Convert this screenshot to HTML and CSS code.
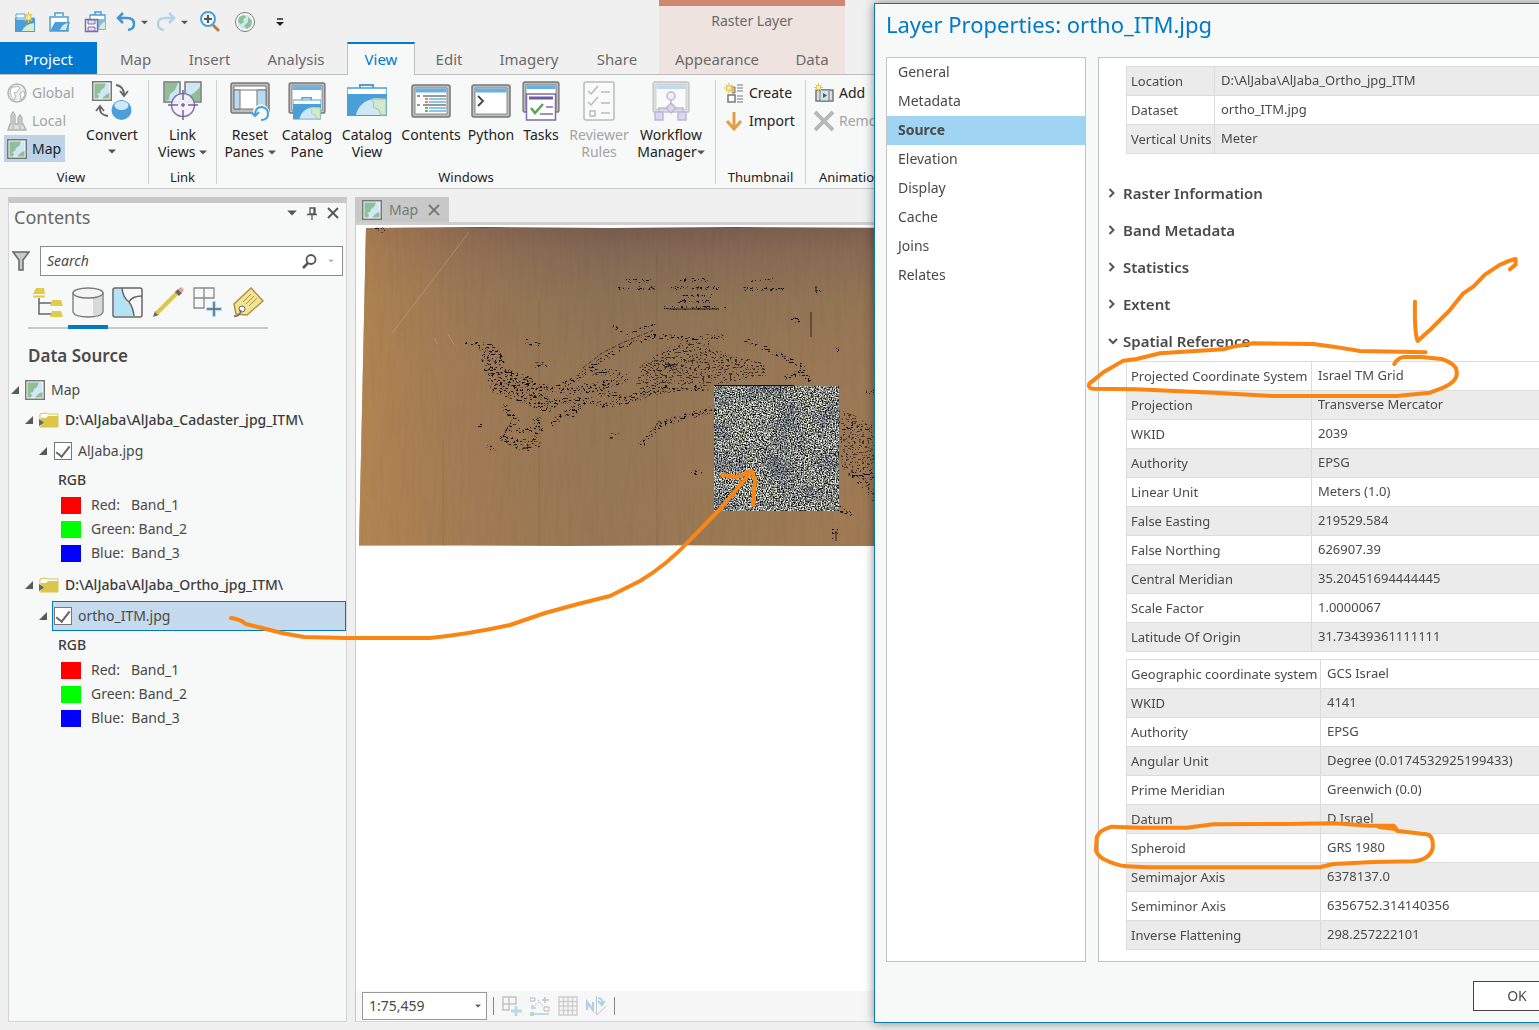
FILE: index.html
```html
<!DOCTYPE html>
<html lang="en">
<head>
<meta charset="utf-8">
<title>Layer Properties: ortho_ITM.jpg</title>
<link rel="stylesheet" href="styles.css">
</head>
<body>
<svg class="defs" width="0" height="0" aria-hidden="true">
  <symbol id="map-thumb" viewBox="0 0 20 20"><rect x=".75" y=".75" width="18.500" height="18.500" fill="#fff" stroke="#777" stroke-width="1.500"/><path d="M2.500 2.500h15v15h-15z" fill="#cfe6f5"/><path d="M2.500 2.500H14L12 7l-3 2-1 3-3 1 2 2-1 2.500H2.500zM15 13l2.500-1v5.500H10l2-2z" fill="#8fbf95"/></symbol>
  <symbol id="toolbox" viewBox="0 0 40 40"><path d="M13 7V4h13v3" fill="none" stroke="#4aa0d8" stroke-width="2"/><path d="M0 7h40v7H0z" fill="#fff" stroke="#4aa0d8" stroke-width="1.500"/><path d="M0 13h40v22H0z" fill="#4a9fd8"/><path d="M9 34q3-14 20-17l10 1v16z" fill="#cde7f6"/><path d="M24 18l15 0v16h-5l-2-5-6-3 1-4z" fill="#d2eacb" stroke="#9bc4a8"/></symbol>
  <symbol id="win" viewBox="0 0 40 34"><rect x="1" y="1" width="38" height="32" rx="2" fill="#bdbdbd" stroke="#777" stroke-width="1.500"/><path d="M4 4h32v26H4z" fill="#fff" stroke="#888"/><path d="M4.500 4.500h31v4h-31z" fill="#67b1e3"/></symbol>
  <symbol id="star" viewBox="0 0 12 12"><path d="M6 0v12M0 6h12M2 2l8 8M10 2l-8 8" stroke="#dfc544" stroke-width="1.300"/><circle cx="6" cy="6" r="3" fill="#fbef9a" stroke="#d9bf3c"/></symbol>
  <symbol id="folder" viewBox="0 0 20 16"><path d="M1 7V2l6-1 2 1h10v13H1z" fill="#fff" stroke="#d9c34c"/><path d="M2 6h5l2-2h10v11H2z" fill="#dbc54c"/><path d="M0 7l5 3.500L0 14z" fill="#666"/></symbol>
  <symbol id="caret" viewBox="0 0 8 5"><path d="M0 .5h8L4 4.500z" fill="currentColor"/></symbol>
  <symbol id="tri" viewBox="0 0 8 8"><path d="M8 0v8H0z" fill="#5a5a5a"/></symbol>
  <symbol id="x" viewBox="0 0 12 12"><path d="M1 1l10 10M11 1L1 11" stroke="currentColor" stroke-width="1.800"/></symbol>
  <symbol id="chev" viewBox="0 0 8 10"><path d="M1.500 1l4 4-4 4" fill="none" stroke="#555" stroke-width="2"/></symbol>
</svg>

<div class="app">
  <header class="top">
    <div class="top-main">
      <div class="quick" role="toolbar" aria-label="Quick access">
        <button aria-label="New project" class="q35"><svg width="22" height="22" viewBox="0 0 22 22"><path d="M1 7h20v14H1z" fill="#4a9fd8"/><path d="M2 7V3h9v4M2 7h12v2H2z" fill="#fff" stroke="#4a9fd8"/><path d="M8 20q3-7 12-8v8z" fill="#d5ecd6"/><use href="#star" x="9" y="1" width="11" height="11"/></svg></button>
        <button aria-label="Open project" class="q35"><svg width="22" height="22" viewBox="0 0 22 22"><path d="M6 5V2h8v3M1 6h18v14H1z" fill="#fff" stroke="#4a9fd8" stroke-width="1.500"/><path d="M1 20l5-9h15l-3 9z" fill="#4a9fd8"/><path d="M11 19q2-6 8-7l-2 7z" fill="#d5ecd6"/></svg></button>
        <button aria-label="Save project" class="q30"><svg width="22" height="22" viewBox="0 0 22 22"><path d="M11 4V1h6v3" fill="none" stroke="#4a9fd8" stroke-width="1.500"/><path d="M6 4h15v14H6z" fill="#fff" stroke="#4a9fd8" stroke-width="1.300"/><path d="M13 8h8v10h-7z" fill="#7fbde3"/><path d="M15 18q1-6 6-7v7z" fill="#d5ecd6"/><path d="M1.500 8.500h12v12h-12z" fill="#fff" stroke="#7b6aa8" stroke-width="1.500"/><path d="M4 9h7v4H4zM4 16h7v4H4z" fill="#e4dff0" stroke="#7b6aa8"/></svg></button>
        <button aria-label="Undo" class="q40"><svg width="20" height="20" viewBox="0 0 20 20"><path d="M7 1L2 6l5 5M2 6h9q7 0 7 6 0 5-6 6" fill="none" stroke="#3f97d3" stroke-width="2.500"/></svg><svg class="car" width="7" height="5"><use href="#caret"/></svg></button>
        <button aria-label="Redo" class="q45"><svg width="20" height="20" viewBox="0 0 20 20"><path d="M13 1l5 5-5 5M18 6H9q-7 0-7 6 0 5 6 6" fill="none" stroke="#b3d3e8" stroke-width="2.500"/></svg><svg class="car" width="7" height="5"><use href="#caret"/></svg></button>
        <button aria-label="Zoom in" class="q35"><svg width="22" height="22" viewBox="0 0 22 22"><path d="M14 14l6 6" stroke="#b97d48" stroke-width="3"/><circle cx="9" cy="8" r="7" fill="#f5fafd" stroke="#4a9fd8" stroke-width="2"/><path d="M9 4v8M5 8h8" stroke="#555" stroke-width="2.200"/></svg></button>
        <button aria-label="Full extent" class="q42"><svg width="22" height="22" viewBox="0 0 22 22"><circle cx="11" cy="11" r="9.500" fill="#fff" stroke="#777"/><circle cx="11" cy="11" r="7.500" fill="#cbe7f2"/><path d="M5 6l5-2 2 2-3 3 1 2-3 2-3-2zM14 6l4 4-1 5-4 3-3-3 4-4z" fill="#8fbf95"/></svg></button>
        <button aria-label="Customize toolbar"><svg width="8" height="9" viewBox="0 0 8 9"><path d="M1 1h6" stroke="#222" stroke-width="1.500"/><path d="M0 4h8L4 8z" fill="#222"/></svg></button>
      </div>
      <nav class="tabs" aria-label="Ribbon">
        <button class="tab project">Project</button><button class="tab t77">Map</button><button class="tab t71">Insert</button><button class="tab t102">Analysis</button><button class="tab active">View</button><button class="tab t68">Edit</button><button class="tab t92">Imagery</button><button class="tab t84">Share</button>
      </nav>
    </div>
    <div class="context">
      <span class="context-title">Raster Layer</span>
      <nav class="tabs" aria-label="Raster Layer"><button class="tab t116">Appearance</button><button class="tab t70">Data</button></nav>
    </div>
  </header>

  <section class="ribbon" aria-label="View commands">
    <div class="group g-view">
      <div class="cmds">
        <div class="stack">
          <button class="small off"><svg width="20" height="20" viewBox="0 0 20 20"><circle cx="10" cy="10" r="9" fill="#eee" stroke="#b5b5b5" stroke-width="1.500"/><path d="M4 5l6-2 3 2-3 4-3 1 2 4-2 3-4-6zM13 10l4-2 1 4-4 5z" fill="#fff" stroke="#b5b5b5"/></svg>Global</button>
          <button class="small off"><svg width="20" height="20" viewBox="0 0 20 20"><path d="M1 19l2-6h1V4l2-3 2 3v9h3V7l2-3 2 3v6h1l3 6z" fill="#ddd" stroke="#b0b0b0" stroke-width="1.300"/><path d="M6 4v14M13 7v11" stroke="#b0b0b0"/></svg>Local</button>
          <button class="small on"><svg width="20" height="20"><use href="#map-thumb"/></svg>Map</button>
        </div>
        <button class="big b72"><svg width="40" height="40" viewBox="0 0 40 40"><use href="#map-thumb" width="20" height="20"/><path d="M24 4q8 1 8 10M28 10l4 5 4-5M16 35Q7 34 8 26M4 30l4-5 4 5" fill="none" stroke="#666" stroke-width="1.800"/><circle cx="29.500" cy="29" r="10" fill="#4a9fd8"/><ellipse cx="29.500" cy="24.500" rx="7" ry="4.500" fill="#cfe8f8"/></svg><span>Convert</span><svg class="car" width="8" height="5"><use href="#caret"/></svg></button>
      </div>
      <h2>View</h2>
    </div>
    <div class="group g-link">
      <div class="cmds">
        <button class="big b68"><svg width="40" height="40" viewBox="0 0 40 40"><path d="M1 1h16v20H1zM22 1h16v20H22z" fill="#cfe6f5" stroke="#777" stroke-width="1.500"/><path d="M2 2h13l-3 7-5 4-1 6-4 1zM37 6v14H25l1-5 5-3z" fill="#8fbf95"/><circle cx="20" cy="24" r="11.500" fill="#f5f3fa" fill-opacity=".9" stroke="#8576ad" stroke-width="1.500"/><path d="M20 9v10M20 29v10M5 24h10M25 24h10M18 24h4M20 22v4" stroke="#7462a3" stroke-width="1.500"/></svg><span>Link<br>Views <svg class="car" width="8" height="5"><use href="#caret"/></svg></span></button>
      </div>
      <h2>Link</h2>
    </div>
    <div class="group g-win">
      <div class="cmds">
        <button class="big b56"><svg width="40" height="40" viewBox="0 0 40 40"><rect x="1" y="2" width="38" height="30" rx="2" fill="#bdbdbd" stroke="#777" stroke-width="1.500"/><path d="M4 5h32v23H4z" fill="#fff" stroke="#777"/><path d="M4 9h32" stroke="#777"/><path d="M4 9h6v19H4zM27 9h9v19h-9z" fill="#b9dbf0" stroke="#777"/><circle cx="31" cy="32" r="8.500" fill="#f7f8f8"/><path d="M21 31l4 4 4-4M25 34q0-8 7-8 6 1 6 7 0 6-7 6" fill="none" stroke="#4a9fd8" stroke-width="2"/></svg><span>Reset<br>Panes <svg class="car" width="8" height="5"><use href="#caret"/></svg></span></button>
        <button class="big b58"><svg width="40" height="40" viewBox="0 0 40 40"><use href="#win" y="1" width="40" height="32"/><use href="#toolbox" x="6" y="14" width="28" height="28"/></svg><span>Catalog<br>Pane</span></button>
        <button class="big b62"><svg width="40" height="40" viewBox="0 0 40 40"><use href="#toolbox" width="40" height="40"/></svg><span>Catalog<br>View</span></button>
        <button class="big b66"><svg width="40" height="40" viewBox="0 0 40 40"><use href="#win" y="3" width="40" height="34"/><path d="M12 15h23M12 24h23" stroke="#777" stroke-width="1.500"/><path d="M6 15h3M6 24h3" stroke="#777" stroke-width="1.500"/><path d="M18 18h17M18 21h17M18 27h17M18 30h17" stroke="#67b1e3" stroke-width="1.500"/><path d="M14 18h3M14 21h3" stroke="#e08a5c" stroke-width="2"/><path d="M14 27h3M14 30h3" stroke="#70b070" stroke-width="2"/></svg><span>Contents</span></button>
        <button class="big b54"><svg width="40" height="40" viewBox="0 0 40 40"><use href="#win" y="3" width="40" height="34"/><path d="M7 15l5 5-5 5" fill="none" stroke="#444" stroke-width="1.800"/></svg><span>Python</span></button>
        <button class="big b46"><svg width="40" height="40" viewBox="0 0 40 40"><use href="#win" width="40" height="32"/><path d="M5.500 13h29v26h-29z" fill="#fff" stroke="#7e6cab" stroke-width="1.500"/><path d="M8 17h24" stroke="#6d58a0" stroke-width="3"/><path d="M10 27l4 5 8-9" fill="none" stroke="#5ba35b" stroke-width="2.500"/><path d="M25 26h7M19 33h13" stroke="#7e6cab" stroke-width="1.500"/></svg><span>Tasks</span></button>
        <button class="big b70 off"><svg width="40" height="40" viewBox="0 0 40 40"><rect x="5" y="1" width="30" height="38" rx="2" fill="#fafafa" stroke="#bbb" stroke-width="1.500"/><path d="M9 10l3 3 7-8M9 21l3 3 7-8M11 30h5v5h-5zM22 11h9M22 22h9M22 32h9" fill="none" stroke="#bbb" stroke-width="1.500"/></svg><span>Reviewer<br>Rules</span></button>
        <button class="big b74"><svg width="40" height="40" viewBox="0 0 40 40"><use href="#win" width="40" height="32" opacity=".4"/><path d="M20 18v8M8 32v-5h24v5" fill="none" stroke="#c0b6d8" stroke-width="1.500"/><circle cx="20" cy="15" r="4" fill="#f2eff8" stroke="#c0b6d8" stroke-width="1.500"/><path d="M20 22l5 5-5 5-5-5zM4 31h8v8H4zM27 31h8v8h-8z" fill="#ddd6ea" stroke="#c0b6d8" stroke-width="1.500"/></svg><span>Workflow<br>Manager<svg class="car" width="8" height="5"><use href="#caret"/></svg></span></button>
      </div>
      <h2>Windows</h2>
    </div>
    <div class="group g-thumb">
      <div class="cmds stack">
        <button class="small"><svg width="20" height="20" viewBox="0 0 20 20"><path d="M5 4h6v6H8" fill="#f3b56a" stroke="#777"/><path d="M4 12h7v7H4z" fill="#fff" stroke="#777" stroke-width="1.500"/><path d="M13 2h6M13 5h6M13 8h6M13 13h6M13 16h6M13 19h6" stroke="#777"/><use href="#star" width="10" height="10"/></svg>Create</button>
        <button class="small"><svg width="20" height="20" viewBox="0 0 20 20"><path d="M10 1v16M3 10l7 8 7-8" fill="none" stroke="#e69c45" stroke-width="3"/></svg>Import</button>
      </div>
      <h2>Thumbnail</h2>
    </div>
    <div class="group g-anim">
      <div class="cmds stack">
        <button class="small"><svg width="20" height="20" viewBox="0 0 20 20"><path d="M2 7h17v11H2z" fill="#ddd" stroke="#777" stroke-width="1.500"/><path d="M6 7h9v11H6z" fill="#cbe7f5" stroke="#777"/><path d="M9 10l4 2.500L9 15z" fill="#555"/><use href="#star" width="9" height="9"/></svg>Add</button>
        <button class="small off"><svg width="20" height="20" viewBox="0 0 20 20"><path d="M1 1l18 18M19 1L1 19" stroke="#b8b8b8" stroke-width="4"/></svg>Remove</button>
      </div>
      <h2>Animation</h2>
    </div>
  </section>

  <main class="work">
    <aside class="pane">
      <div class="pane-head"><h1>Contents</h1>
        <button aria-label="Pane menu"><svg width="10" height="6" viewBox="0 0 8 5"><use href="#caret"/></svg></button>
        <button aria-label="Pin"><svg width="10" height="13" viewBox="0 0 10 13"><path d="M3 1h5v6H3zM0 7.500h10M5 8v5M7 1v6" fill="none" stroke="#555" stroke-width="1.300"/></svg></button>
        <button aria-label="Close pane"><svg width="12" height="12" viewBox="0 0 12 12"><use href="#x"/></svg></button>
      </div>
      <div class="search-row">
        <svg width="18" height="22" viewBox="0 0 18 22"><path d="M1 2h16l-6 8v10H7V10z" fill="#c9c9c9" stroke="#666" stroke-width="1.500"/></svg>
        <div class="search"><input type="text" aria-label="Search" placeholder="Search">
          <svg width="15" height="15" viewBox="0 0 15 15"><circle cx="9" cy="5.500" r="4.500" fill="none" stroke="#555" stroke-width="1.800"/><path d="M6 9l-5 5" stroke="#555" stroke-width="2.500"/></svg>
          <svg class="pale" width="6" height="4" viewBox="0 0 8 5"><use href="#caret"/></svg></div>
      </div>
      <div class="views" role="toolbar" aria-label="List by">
        <button aria-label="Drawing order"><svg width="32" height="32" viewBox="0 0 32 32"><path d="M7 12v16h14M7 17h14" fill="none" stroke="#666" stroke-width="1.500"/><path d="M4 2h8l1 6H1zM1 9.500h12v2H1zM20 14h9l2 6H18zM20 25h9l2 6H18z" fill="#e0cb4a"/></svg></button>
        <button aria-label="Data source" class="sel"><svg width="32" height="32" viewBox="0 0 32 32"><path d="M1 7v19q2 5 15 5t15-5V7z" fill="#f5f5f5" stroke="#777" stroke-width="1.300"/><path d="M21 11l9-3v18q-2 3-9 4z" fill="#d8d8d8"/><ellipse cx="16" cy="7" rx="15" ry="5" fill="#f3f3f3" stroke="#777" stroke-width="1.300"/></svg></button>
        <button aria-label="Selection"><svg width="32" height="32" viewBox="0 0 32 32"><rect x="1" y="2" width="29" height="29" rx="2" fill="#f8f8f8" stroke="#666" stroke-width="1.500"/><path d="M2 3h8q1 10 7 14 4 4 5 13H2z" fill="#b3e3f5"/><path d="M10 2q1 10 7 14 4 5 5 14M17 16q3-6 13-6" fill="none" stroke="#666" stroke-width="1.500"/></svg></button>
        <button aria-label="Editing"><svg width="32" height="32" viewBox="0 0 32 32"><path d="M1 31l2-6 4 4z" fill="#666"/><path d="M3 26L24 5l3 3L6 29z" fill="#dcc748"/><path d="M23 6l3-3 4 4-3 3z" fill="#666"/><path d="M26 3l3-2 3 3-2 3z" fill="#e5a39c"/></svg></button>
        <button aria-label="Snapping"><svg width="32" height="32" viewBox="0 0 32 32"><path d="M2 2h20v10H2zM2 12h10v10H2zM12 2v10" fill="none" stroke="#888" stroke-width="1.300"/><path d="M22 15v16M14 23h16" stroke="#b5e0f5" stroke-width="4"/><path d="M22 16v14M15 23h14" stroke="#567" stroke-width="1.500"/></svg></button>
        <button aria-label="Labeling"><svg width="32" height="32" viewBox="0 0 32 32"><path d="M19 2l12 13-16 14-11-1-2-10z" fill="#f3e394" stroke="#b58e3f" stroke-width="1.500"/><path d="M11 16l8-8M14 18l8-8M17 20l8-8" stroke="#b58e3f"/><circle cx="10" cy="23" r="3" fill="#fff" stroke="#666"/><path d="M9 24q-1 7-7 6" fill="none" stroke="#666" stroke-width="1.500"/></svg></button>
      </div>
      <h2 class="ds">Data Source</h2>
      <ul class="tree">
        <li class="row r-map"><svg width="8" height="8"><use href="#tri"/></svg><svg width="20" height="20"><use href="#map-thumb"/></svg><span>Map</span></li>
        <li class="row r-fold"><svg width="8" height="8"><use href="#tri"/></svg><svg width="20" height="16"><use href="#folder"/></svg><b>D:\AlJaba\AlJaba_Cadaster_jpg_ITM\</b></li>
        <li class="row r-layer"><svg width="8" height="8"><use href="#tri"/></svg><label><input type="checkbox" checked>AlJaba.jpg</label></li>
        <li class="row r-rgb"><b>RGB</b></li>
        <li class="row r-band"><i class="red"></i>Red:   Band_1</li>
        <li class="row r-band"><i class="green"></i>Green: Band_2</li>
        <li class="row r-band"><i class="blue"></i>Blue:  Band_3</li>
        <li class="row r-fold second"><svg width="8" height="8"><use href="#tri"/></svg><svg width="20" height="16"><use href="#folder"/></svg><b>D:\AlJaba\AlJaba_Ortho_jpg_ITM\</b></li>
        <li class="row r-layer chosen"><svg width="8" height="8"><use href="#tri"/></svg><label><input type="checkbox" checked>ortho_ITM.jpg</label></li>
        <li class="row r-rgb"><b>RGB</b></li>
        <li class="row r-band"><i class="red"></i>Red:   Band_1</li>
        <li class="row r-band"><i class="green"></i>Green: Band_2</li>
        <li class="row r-band"><i class="blue"></i>Blue:  Band_3</li>
      </ul>
    </aside>

    <section class="view">
      <div class="doc-tabs"><div class="doc-tab"><svg width="20" height="20"><use href="#map-thumb"/></svg><span>Map</span><button aria-label="Close map"><svg width="12" height="12"><use href="#x"/></svg></button></div></div>
      <div class="canvas">
        <svg width="560" height="326" viewBox="356 225 560 326" role="img" aria-label="Scanned cadastral sheet with orthophoto">
          <defs>
            <linearGradient id="sheet" x1="0" y1="0" x2="0" y2="1"><stop offset="0" stop-color="#6c504b"/><stop offset=".08" stop-color="#7d6153"/><stop offset=".22" stop-color="#8a7053"/><stop offset=".45" stop-color="#967656"/><stop offset="1" stop-color="#9c7853"/></linearGradient>
            <linearGradient id="warm"><stop offset="0" stop-color="#bd8b50" stop-opacity=".7"/><stop offset=".2" stop-color="#a97f55" stop-opacity=".5"/><stop offset=".45" stop-color="#8e7857" stop-opacity=".3"/><stop offset=".9" stop-color="#a88058" stop-opacity=".3"/></linearGradient>
            <filter id="ink" x="-10%" y="-10%" width="120%" height="120%" color-interpolation-filters="sRGB"><feTurbulence type="fractalNoise" baseFrequency=".37 .61" numOctaves="4" seed="11"/><feColorMatrix values="0 0 0 0 .08  0 0 0 0 .06  0 0 0 0 .1  14 0 0 0 -8.200"/><feComposite in2="SourceGraphic" operator="in"/></filter>
            <filter id="grain" x="0" y="0" width="100%" height="100%" color-interpolation-filters="sRGB"><feTurbulence type="fractalNoise" baseFrequency=".71 .77" numOctaves="4" seed="3"/><feColorMatrix values="2.300 .5 .3 0 -1.030  2.300 .5 .2 0 -.970  2.300 .3 .5 0 -1.050  0 0 0 0 1"/></filter>
            <filter id="tone" x="0" y="0" width="100%" height="100%" color-interpolation-filters="sRGB"><feTurbulence type="fractalNoise" baseFrequency=".03 .04" numOctaves="2" seed="8"/><feColorMatrix values="0 0 0 0 .22  0 0 0 0 .28  0 0 0 0 .38  2 0 0 0 -.850"/></filter>
            <filter id="weave" x="0" y="0" width="100%" height="100%" color-interpolation-filters="sRGB"><feTurbulence type="fractalNoise" baseFrequency=".25 .02" numOctaves="3" seed="5"/><feColorMatrix values="0 0 0 0 .2  0 0 0 0 .12  0 0 0 0 .05  .9 0 0 0 -.4"/></filter>
          </defs>
          <path d="M366 228l118-1 126 1 125-1 181 1v318l-110 0-120-1-120 1-110-1-97 0z" fill="url(#sheet)"/>
          <path d="M366 228h550v318H359z" fill="url(#warm)"/>
          <path d="M368 229h548v317H361z" filter="url(#weave)" opacity=".1"/>
          <path d="M469 232l-63 83-14 18M434 337l3 7M448 334l7 12" stroke="#d8b584" stroke-opacity=".4" fill="none"/>
          <path d="M657 250v296M539 300v246M443 440v106" stroke="#5f452d" stroke-opacity=".2"/>
          <g filter="url(#ink)" fill="none" stroke="#000">
            <path d="M626 281h28M618 288h38M680 280h28M671 288h48M682 296h32M678 301h34M750 280h26M742 289h42" stroke-width="4"/>
            <path d="M664 308h62M465 344h20M611 324l12 11M627 335l28-11" stroke-width="4"/>
            <path d="M479 347l10-5 14 13 3 18 22 2 20 18 12 10-12 10-36-14-20-7-9-25z" fill="#000" stroke="none"/>
            <path d="M505 370l22 10 25 10 24-11 24-18 22-14 32-11 28 2 27 5" stroke-width="5"/>
            <path d="M540 402l50-2 15 6 20-4 30-15 50 2M503 405l13 16-13 17 15 8M515 430h25M510 440l30 5M535 417l5 13-14 20M551 424l25-17M640 446l20-22 28-8 24-6" stroke-width="6"/>
            <path d="M560 392l28-3 40-11M570 415l15-14M583 387l45 13 28-14M590 372h30" stroke-width="8"/>
            <path d="M640 366l30-20 22-6 40 16 32 6 2 14-54 9-66 12-10-12z" fill="#000" stroke="none" opacity=".7"/>
            <path d="M745 340l22 9 40 20M785 378l17-6 12 12" stroke-width="5"/>
            <path d="M838 410q30 6 38 30v66q-14-20-34-38z" fill="#000" stroke="none" opacity=".65"/>
            <path d="M836 506l15 10M835 540v-13M840 427h38M845 475h30" stroke-width="6"/>
            <path d="M700 337h24M818 295v-8M790 320h10M835 350h4M525 341l15 5M506 283h2M478 426h4M486 448h10M690 473h12M535 365h12M609 436h10M865 392h9M375 230h10" stroke-width="5"/>
          </g>
          <g fill="none" stroke="#17110f" stroke-opacity=".75" stroke-width="1" stroke-dasharray="1 4 2 3 1 6 1 2">
            <path d="M485 351l14 3 4 8M484 358l14 5 7 9M488 374l22-2 20 9 18 10M491 384l22 2 16 8 22 6M504 406l9 12-12 21 18 11 12-6M540 417l-1 14-10 15"/>
            <path d="M662 358l10 12 14-5M658 365l20 2M655 374l16-8 12 9M668 381l20-20 22 2M688 362l20-12 14 8 26 12M640 400l26-12 44 2M641 445l17-22 28-8 22-4M845 463l25-2M848 475l20 4"/>
            <path d="M583 368l19-15 22-11 30-12" stroke-dasharray="3 1 1 2"/>
          </g>
          <path d="M664 367l14-3M668 362l5 9M811 312v25M669 309h50M522 449l8-2M836 541v-10M816 286v6" stroke="#111" stroke-opacity=".8"/>
          <rect x="714" y="386" width="125" height="125" filter="url(#grain)"/>
          <rect x="714" y="386" width="125" height="125" filter="url(#tone)" opacity=".5"/>
          <path d="M714 385.500h80" stroke="#111"/>
        </svg>
      </div>
      <div class="status">
        <select aria-label="Map scale"><option>1:75,459</option></select>
        <svg class="scale-arrow" width="6" height="4" viewBox="0 0 8 5"><use href="#caret"/></svg>
        <hr>
        <button aria-label="Snapping"><svg width="20" height="20" viewBox="0 0 20 20"><path d="M1 1h13v7H1zM1 8h6v6H1zM7 1v7" fill="none" stroke="#c4c4c4" stroke-width="1.500"/><path d="M14 10v10M9 15h11" stroke="#b9dcec" stroke-width="3"/></svg></button>
        <button aria-label="Infer"><svg width="20" height="20" viewBox="0 0 20 20"><path d="M0 2h5v3H0zM14 11h5v4h-5z" fill="none" stroke="#bbb"/><path d="M15 1v6M12 4h7" stroke="#c4c4c4" stroke-width="1.500"/><path d="M3 11l7-6M8 4l6 7" stroke="#b9c9d2" stroke-dasharray="2 1"/><path d="M2 9v3h4M3 18h16" fill="none" stroke="#b9dcec" stroke-width="2"/><path d="M0 16h4v4H0z" fill="#bdd8bf"/></svg></button>
        <button aria-label="Grid"><svg width="20" height="20" viewBox="0 0 20 20"><path d="M1 1h18v18H1zM1 5.500h18M1 10h18M1 14.500h18M5.500 1v18M10 1v18M14.500 1v18" fill="none" stroke="#cfcfcf" stroke-width="1.500"/></svg></button>
        <button aria-label="North correction"><svg width="20" height="20" viewBox="0 0 20 20"><path d="M1 14V6l6 8V6" fill="none" stroke="#a9d2e8" stroke-width="2.200"/><path d="M10.500 0v19M11 19l9-9" fill="none" stroke="#c4c4c4"/><path d="M12 2q5 0 4 6M12 5l4 4 3-4" fill="none" stroke="#a9d2e8" stroke-width="2"/></svg></button>
        <hr>
      </div>
    </section>
  </main>

  <div class="dialog" role="dialog" aria-labelledby="dlg-title">
    <h1 id="dlg-title">Layer Properties: ortho_ITM.jpg</h1>
    <div class="dlg-body">
      <nav class="pages" aria-label="Pages"><a href="#general">General</a><a href="#metadata">Metadata</a><a href="#source" class="cur">Source</a><a href="#elevation">Elevation</a><a href="#display">Display</a><a href="#cache">Cache</a><a href="#joins">Joins</a><a href="#relates">Relates</a></nav>
      <div class="sheet">
        <table class="props k88 odd">
          <tr><th scope="row">Location</th><td>D:\AlJaba\AlJaba_Ortho_jpg_ITM</td></tr>
          <tr><th scope="row">Dataset</th><td>ortho_ITM.jpg</td></tr>
          <tr><th scope="row">Vertical Units</th><td>Meter</td></tr>
        </table>
        <div class="sections">
          <button aria-expanded="false"><svg width="8" height="10"><use href="#chev"/></svg>Raster Information</button>
          <button aria-expanded="false"><svg width="8" height="10"><use href="#chev"/></svg>Band Metadata</button>
          <button aria-expanded="false"><svg width="8" height="10"><use href="#chev"/></svg>Statistics</button>
          <button aria-expanded="false"><svg width="8" height="10"><use href="#chev"/></svg>Extent</button>
          <button aria-expanded="true"><svg width="10" height="8" viewBox="0 0 10 8"><path d="M1 2l4 4 4-4" fill="none" stroke="#555" stroke-width="2"/></svg>Spatial Reference</button>
        </div>
        <table class="props k185">
          <tr><th scope="row">Projected Coordinate System</th><td>Israel TM Grid</td></tr>
          <tr><th scope="row">Projection</th><td>Transverse Mercator</td></tr>
          <tr><th scope="row">WKID</th><td>2039</td></tr>
          <tr><th scope="row">Authority</th><td>EPSG</td></tr>
          <tr><th scope="row">Linear Unit</th><td>Meters (1.0)</td></tr>
          <tr><th scope="row">False Easting</th><td>219529.584</td></tr>
          <tr><th scope="row">False Northing</th><td>626907.39</td></tr>
          <tr><th scope="row">Central Meridian</th><td>35.20451694444445</td></tr>
          <tr><th scope="row">Scale Factor</th><td>1.0000067</td></tr>
          <tr><th scope="row">Latitude Of Origin</th><td>31.73439361111111</td></tr>
        </table>
        <table class="props k194">
          <tr><th scope="row">Geographic coordinate system</th><td>GCS Israel</td></tr>
          <tr><th scope="row">WKID</th><td>4141</td></tr>
          <tr><th scope="row">Authority</th><td>EPSG</td></tr>
          <tr><th scope="row">Angular Unit</th><td>Degree (0.0174532925199433)</td></tr>
          <tr><th scope="row">Prime Meridian</th><td>Greenwich (0.0)</td></tr>
          <tr><th scope="row">Datum</th><td>D Israel</td></tr>
          <tr><th scope="row">Spheroid</th><td>GRS 1980</td></tr>
          <tr><th scope="row">Semimajor Axis</th><td>6378137.0</td></tr>
          <tr><th scope="row">Semiminor Axis</th><td>6356752.314140356</td></tr>
          <tr><th scope="row">Inverse Flattening</th><td>298.257222101</td></tr>
        </table>
      </div>
    </div>
    <div class="dlg-foot"><button>OK</button></div>
  </div>

  <svg class="marks" width="1539" height="1030" viewBox="0 0 1539 1030" aria-hidden="true">
    <g fill="none" stroke="#fb8512" stroke-width="4" stroke-linecap="round" stroke-linejoin="round">
      <path d="M231 618Q240 619 246 624L258 627L282 633L304 637L345 638H430Q470 634 510 625L545 613L578 604L610 596L640 581Q668 564 690 540L722 507L736 490L752 471M722 475L737 477L752 471L755 480L753 505"/>
      <g transform="translate(1080 160) scale(.3333)" stroke-width="12">
        <path d="M1037 577l-197-4-80-13-60-8-180-2-60 10-30 8-190 12-70 17-40 5-60 35-42 34q-5 13 10 15l132 2 230 10 180 10h370l100-10 40-15q45-20 40-48 0-22-45-38l-60-6h-50q-20 0-32 21"/>
        <path d="M1290 328l17-14v-17q-20 4-50 19l-42 28-35 36-30 20-40 50-60 60-37 33q-10-25-8-118"/>
      </g>
      <g transform="translate(1080 680) scale(.3333)" stroke-width="12">
        <path d="M895 440l55 8-8-11-72 0-110-7-140 2-220 1-80 10H180l-85-3q-42 12-45 35l-2 35q3 15 22 27 40 20 70 22l60 3h520l40-10 120-6 120-2q50-5 58-39 5-45-28-43l-80-10"/>
      </g>
    </g>
  </svg>
</div>
</body>
</html>
```
FILE: styles.css
```css
* { box-sizing: border-box; }
html, body { height: 100%; }
body { margin: 0; background: #f0f0f0; color: #4a4a4a; font: 14px/20px "Noto Sans", "Open Sans", sans-serif; }
h1, h2, ul, hr { margin: 0; padding: 0; font-weight: 400; list-style: none; }
button, input, select { font: inherit; color: inherit; }
button { border: 0; padding: 0; background: none; white-space: nowrap; }
svg { flex: none; display: block; }
.defs { position: absolute; }
.app { position: relative; height: 100vh; min-height: 1030px; display: flex; flex-direction: column; overflow: hidden; }

/* title bar and tabs */
.top { display: flex; height: 75px; border-bottom: 1px solid #bfbfbf; flex: none; }
.top-main { display: flex; flex-direction: column; }
.quick { display: flex; align-items: center; height: 42px; padding: 2px 0 0 14px; }
.quick button { display: flex; align-items: center; gap: 5px; flex: none; height: 24px; }
.q35 { width: 35px; }
.q30 { width: 32px; }
.q40 { width: 40px; }
.q42 { width: 42px; }
.q45 { width: 43px; }
.car { color: #555; }
.tabs { display: flex; height: 32px; }
.tab { height: 32px; padding-top: 2px; font-size: 15px; color: #6a6a6a; }
.project { width: 97px; background: #0079d1; color: #fff; }
.active { width: 68px; height: 33px; border: 1px solid #bfbfbf; border-top: 2px solid #0079d1; border-bottom: 0; background: #f7f8f8; color: #0079c8; padding: 0 0 2px; }
.t68 { width: 68px; }
.t70 { width: 70px; padding-left: 4px; }
.t71 { width: 71px; }
.t77 { width: 77px; }
.t84 { width: 84px; }
.t92 { width: 92px; }
.t102 { width: 102px; }
.t116 { width: 116px; }
.context { width: 186px; border-top: 6px solid #d0876f; background: #eee3df; display: flex; flex-direction: column; justify-content: space-between; }
.context-title { text-align: center; padding-top: 5px; color: #6a6a6a; }

/* ribbon */
.ribbon { display: flex; flex: none; height: 114px; padding: 5px 0 4px; background: #f7f8f8; border-bottom: 1px solid #c8c8c8; color: #222; }
.group { display: flex; flex-direction: column; justify-content: space-between; flex: none; border-right: 1px solid #d0d0d0; }
.group h2 { font-size: 13px; line-height: 14px; text-align: center; }
.cmds { display: flex; }
.g-view { width: 149px; }
.g-view h2 { padding-right: 6px; }
.g-link { width: 68px; }
.g-win { width: 499px; }
.g-win .cmds { padding-left: 5px; }
.g-thumb { width: 90px; }
.g-thumb .cmds, .g-anim .cmds { padding-left: 5px; }
.g-anim { width: 90px; }
.stack { display: flex; flex-direction: column; align-items: flex-start; }
.g-view .stack { padding-left: 4px; width: 76px; }
.small { display: flex; align-items: center; gap: 5px; height: 28px; padding: 0 4px 3px 3px; }
.small.on { background: #bcd3e8; height: 27px; margin-top: -1px; padding-bottom: 0; }
.off { color: #a3a3a3; }
.big { display: flex; flex-direction: column; align-items: center; gap: 5px; line-height: 17px; }
.big > svg:first-child { margin-top: 1px; }
.big > svg.car { margin-top: 1px; }
.big span svg { display: inline-block; vertical-align: 2px; }
.b46 { width: 46px; }
.b54 { width: 54px; }
.b56 { width: 56px; }
.b58 { width: 58px; }
.b62 { width: 62px; }
.b66 { width: 66px; }
.b68 { width: 67px; }
.b70 { width: 70px; }
.b72 { width: 72px; }
.b74 { width: 74px; }

/* workspace */
.work { display: grid; grid-template-columns: 339px 1fr; gap: 8px; flex: 1; min-height: 0; padding: 8px 0 8px 8px; }
.pane { background: #f7f8f8; border: 1px solid #d4d4d4; border-top: 6px solid #c8c8c8; }
.pane-head { display: flex; align-items: center; height: 28px; padding: 0 7px 0 5px; gap: 10px; }
.pane-head button { padding-bottom: 8px; color: #555; }
.pane-head h1 { flex: 1; font-size: 18px; color: #666; }
.search-row { display: flex; align-items: center; gap: 10px; padding: 15px 3px 0; }
.search { display: flex; align-items: center; flex: 1; height: 30px; padding: 0 8px 0 0; gap: 11px; border: 1px solid #8b8b8b; background: #fff; }
.search input { flex: 1; min-width: 0; border: 0; padding: 0 6px; outline: 0; background: none; font-style: italic; }
.search input::placeholder { color: #4a4a4a; opacity: 1; }
.pale { color: #b5b5b5; }
.views { display: flex; width: 240px; margin: 10px 0 0 19px; border-bottom: 2px solid #c9c9c9; height: 43px; }
.views button { width: 40px; height: 43px; display: flex; justify-content: center; }
.views .sel { border-bottom: 4px solid #0079c8; }
.ds { margin: 15px 0 0 19px; font-size: 17px; line-height: 24px; font-weight: 600; }
.tree { padding-top: 6px; }
.row { display: flex; align-items: center; white-space: pre; }
.row b { font-weight: 500; color: #3c3c3c; }
.r-map { height: 31px; padding-left: 2px; gap: 6px; }
.r-fold { height: 30px; padding-left: 16px; gap: 6px; }
.second { margin-top: 5px; }
.r-layer { height: 32px; padding-left: 30px; gap: 5px; }
.r-layer label { display: flex; align-items: center; flex: 1; height: 30px; gap: 6px; padding-left: 2px; }
.chosen label { border: 1px solid #0079c0; background: #c5dbed; padding-left: 1px; }
.r-layer input { appearance: none; margin: 0; width: 18px; height: 18px; border: 1px solid #777; background: #fff; display: flex; justify-content: center; }
.r-layer input:checked::before { content: ""; width: 6px; height: 12px; border: solid #666; border-width: 0 2px 2px 0; rotate: 38deg; }
.r-rgb { height: 26px; padding-left: 49px; }
.r-band { height: 24px; padding-left: 52px; gap: 10px; }
.r-band i { width: 20px; height: 17px; }
.red { background: #f00; }
.green { background: #0f0; }
.blue { background: #00f; }

.view { display: flex; flex-direction: column; min-width: 0; border-left: 1px solid #c8c8c8; border-bottom: 1px solid #d8d8d8; }
.doc-tabs { border-bottom: 3px solid #cfcfcf; flex: none; }
.doc-tab { display: flex; align-items: center; gap: 7px; width: 93px; height: 25px; padding-left: 6px; background: #c8c8c8; color: #777; }
.doc-tab button { margin-left: 3px; color: #777; }
.canvas { flex: 1; min-height: 0; background: #fff; overflow: hidden; }
.status { display: flex; align-items: center; height: 30px; padding-left: 6px; gap: 8px; background: #f7f7f7; flex: none; }
.status select { appearance: none; width: 125px; height: 28px; border: 1px solid #999; border-radius: 0; background: #fff; padding: 0 6px; }
.scale-arrow { margin-left: -20px; margin-right: 4px; color: #555; }
.status hr { width: 1px; height: 18px; border: 0; background: #888; }

/* layer properties window */
.dialog { position: absolute; left: 874px; right: -40px; top: 3px; bottom: 7px; display: flex; flex-direction: column; padding: 5px 17px 11px 11px; border: 1px solid #0b7aa8; background: #f7f8f8; box-shadow: 0 0 10px rgba(0, 0, 0, .45); }
.dialog h1 { font-size: 22px; line-height: 30px; color: #0079c8; }
.dlg-body { display: flex; flex: 1; gap: 12px; padding-top: 18px; min-height: 0; }
.pages { width: 200px; border: 1px solid #c4c4c4; background: #fff; }
.pages a { display: block; height: 29px; padding: 4px 11px; color: inherit; text-decoration: none; }
.pages a.cur { background: #9fd4f2; font-weight: 700; }
.sheet { flex: 1; border: 1px solid #c4c4c4; background: #fff; padding: 8px 0 0 27px; }
.props { width: 100%; border-collapse: collapse; table-layout: fixed; border: 1px solid #c0c0c0; font-size: 13px; }
.props th { font-weight: 400; text-align: left; padding: 0 0 0 4px; white-space: nowrap; border: 1px solid #dcdcdc; }
.props td { padding: 0 0 2px 6px; border: 1px solid #dcdcdc; }
.props tr { height: 29px; }
.props tr:nth-child(even) { background: #ebebeb; }
.props.odd { border-top: 0; }
.props.odd tr { background: #ebebeb; }
.props.odd tr:nth-child(even) { background: #fff; }
.k88 th { width: 88px; }
.k185 th { width: 185px; }
.k194 th { width: 194px; }
.k194 { margin-top: 7px; }
.sections { display: flex; flex-direction: column; padding: 20px 0 2px; margin-left: -18px; }
.sections button { display: flex; align-items: center; gap: 7px; height: 37px; font-size: 15px; font-weight: 600; }
.sections button[aria-expanded="true"] { gap: 5px; }
.dlg-foot { display: flex; justify-content: flex-end; padding-top: 19px; }
.dlg-foot button { width: 88px; height: 30px; border: 1px solid #444; background: #fff; }
.marks { position: absolute; left: 0; top: 0; pointer-events: none; }
```
